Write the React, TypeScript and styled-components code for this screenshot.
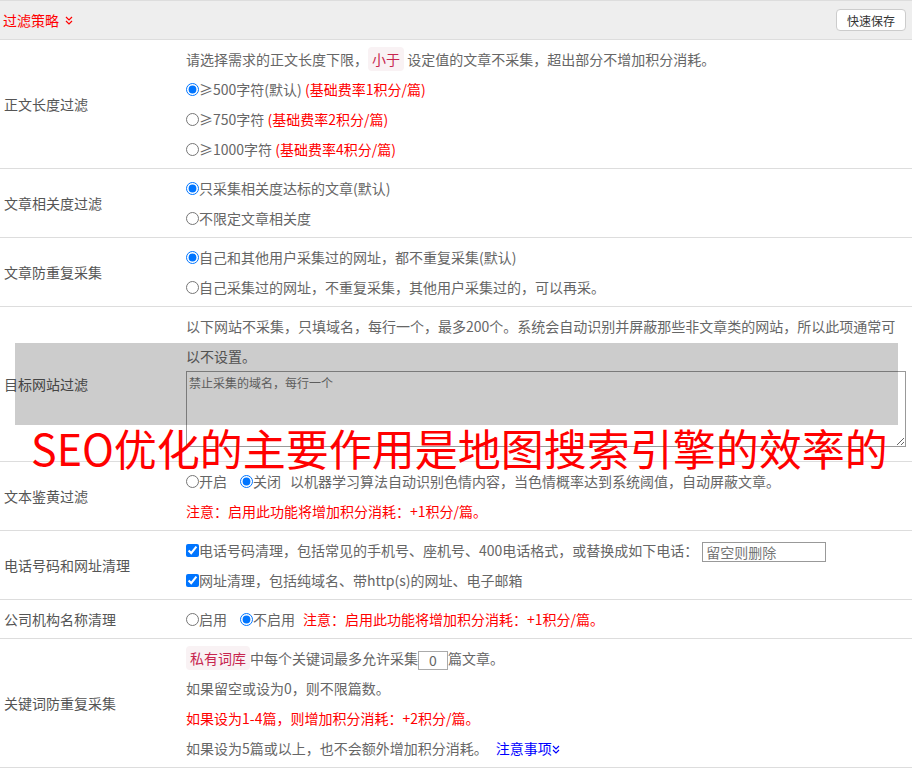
import styled, { createGlobalStyle } from 'styled-components';

const font = '"Noto Sans CJK SC", "Noto Sans", sans-serif';

const GlobalStyle = createGlobalStyle`
  body {
    margin: 0;
    background: #fff;
    font-family: ${font};
    font-size: 14px;
    color: #666;
  }
`;

const Page = styled.div`
  position: relative;
  width: 912px;
`;

const Header = styled.div`
  display: flex;
  align-items: center;
  justify-content: space-between;
  height: 38px;
  padding: 0 6px 0 3px;
  background: #eee;
  border-top: 1px solid #ddd;
  border-bottom: 1px solid #ddd;
`;

const Title = styled.div`
  display: flex;
  align-items: center;
  gap: 6px;
  color: #f00;
  font-size: 14px;
`;

const SaveButton = styled.button`
  height: 22px;
  padding: 0 10px;
  font-family: ${font};
  font-size: 12px;
  color: #333;
  background: #fff;
  border: 1px solid #ccc;
  border-radius: 4px;
`;

const Row = styled.div`
  display: grid;
  grid-template-columns: 186px 1fr;
  padding: 4px 6px 4px 0;
  border-bottom: 1px solid #ddd;
`;

const Label = styled.div`
  align-self: center;
  padding-left: 4px;
  color: #555;
  line-height: 20px;
`;

const Content = styled.div`
  line-height: 30px;
`;

const Line = styled.div`
  white-space: nowrap;
`;

const Para = styled.p`
  margin: 0;
`;

const Choice = styled.label<{ $gap?: number }>`
  display: inline-flex;
  align-items: center;
  height: 30px;
  vertical-align: top;
  margin-right: ${p => p.$gap ?? 0}px;
`;

const Box = styled.input`
  width: 13px;
  height: 13px;
  margin: 0;
`;

const Warn = styled.span`
  color: #f00;
`;

const Badge = styled.span`
  padding: 2px 4px;
  border-radius: 4px;
  background: #f9f2f4;
  color: #c7254e;
`;

const Area = styled.textarea`
  display: block;
  box-sizing: border-box;
  width: 720px;
  height: 76px;
  margin: 0 0 10px;
  padding: 2px;
  border: 1px solid #999;
  font-family: ${font};
  font-size: 12px;
  color: #666;
  resize: vertical;
`;

const PhoneInput = styled.input`
  box-sizing: border-box;
  width: 124px;
  height: 20px;
  margin-left: 4px;
  padding: 0 3px;
  border: 1px solid #999;
  font-family: ${font};
  font-size: 14px;
  vertical-align: middle;
`;

const CountInput = styled.input`
  box-sizing: border-box;
  width: 30px;
  height: 19px;
  padding: 0;
  border: 1px solid #aaa;
  font-family: ${font};
  font-size: 14px;
  color: #666;
  text-align: center;
  vertical-align: middle;
`;

const Link = styled.a`
  margin-left: 8px;
  color: #00f;
  text-decoration: none;
  cursor: pointer;
`;

// watermark box and caption laid over the page
const Shade = styled.div`
  position: absolute;
  left: 15px;
  top: 343px;
  width: 883px;
  height: 82px;
  background: rgba(0, 0, 0, 0.2);
  pointer-events: none;
`;

const Caption = styled.div`
  position: absolute;
  left: 31px;
  top: 420px;
  font-size: 43px;
  line-height: 54px;
  color: #f00;
  white-space: nowrap;
  pointer-events: none;
`;

const Chevrons = ({ color }: { color: string }) => (
  <svg width='8' height='9' viewBox='0 0 8 9' fill='none' stroke={color} strokeWidth='1.2'>
    <polyline points='1,1 4,4 7,1' />
    <polyline points='1,5 4,8 7,5' />
  </svg>
);

const Radio = ({ name, checked, text, gap }: { name: string; checked?: boolean; text: string; gap?: number }) => (
  <Choice $gap={gap}>
    <Box type='radio' name={name} defaultChecked={checked} />
    {text}
  </Choice>
);

export default function App() {
  return (
    <Page>
      <GlobalStyle />
      <Header>
        <Title>
          过滤策略
          <Chevrons color='#f00' />
        </Title>
        <SaveButton type='button'>快速保存</SaveButton>
      </Header>

      <Row>
        <Label>正文长度过滤</Label>
        <Content>
          <Line>
            请选择需求的正文长度下限，<Badge>小于</Badge> 设定值的文章不采集，超出部分不增加积分消耗。
          </Line>
          <Line>
            <Radio name='len' checked text='≥500字符(默认)' /> <Warn>(基础费率1积分/篇)</Warn>
          </Line>
          <Line>
            <Radio name='len' text='≥750字符' /> <Warn>(基础费率2积分/篇)</Warn>
          </Line>
          <Line>
            <Radio name='len' text='≥1000字符' /> <Warn>(基础费率4积分/篇)</Warn>
          </Line>
        </Content>
      </Row>

      <Row>
        <Label>文章相关度过滤</Label>
        <Content>
          <Line><Radio name='rel' checked text='只采集相关度达标的文章(默认)' /></Line>
          <Line><Radio name='rel' text='不限定文章相关度' /></Line>
        </Content>
      </Row>

      <Row>
        <Label>文章防重复采集</Label>
        <Content>
          <Line><Radio name='dup' checked text='自己和其他用户采集过的网址，都不重复采集(默认)' /></Line>
          <Line><Radio name='dup' text='自己采集过的网址，不重复采集，其他用户采集过的，可以再采。' /></Line>
        </Content>
      </Row>

      <Row>
        <Label>目标网站过滤</Label>
        <Content>
          <Para>
            以下网站不采集，只填域名，每行一个，最多200个。系统会自动识别并屏蔽那些非文章类的网站，所以此项通常可以不设置。
          </Para>
          <Area placeholder='禁止采集的域名，每行一个' />
        </Content>
      </Row>

      <Row>
        <Label>文本鉴黄过滤</Label>
        <Content>
          <Line>
            <Radio name='porn' text='开启' gap={13} />
            <Radio name='porn' checked text='关闭' gap={9} />
            以机器学习算法自动识别色情内容，当色情概率达到系统阈值，自动屏蔽文章。
          </Line>
          <Line>
            <Warn>注意：启用此功能将增加积分消耗：+1积分/篇。</Warn>
          </Line>
        </Content>
      </Row>

      <Row>
        <Label>电话号码和网址清理</Label>
        <Content>
          <Line>
            <Choice>
              <Box type='checkbox' defaultChecked />
              电话号码清理，包括常见的手机号、座机号、400电话格式，或替换成如下电话：
            </Choice>
            <PhoneInput type='text' placeholder='留空则删除' />
          </Line>
          <Line>
            <Choice>
              <Box type='checkbox' defaultChecked />
              网址清理，包括纯域名、带http(s)的网址、电子邮箱
            </Choice>
          </Line>
        </Content>
      </Row>

      <Row>
        <Label>公司机构名称清理</Label>
        <Content>
          <Line>
            <Radio name='org' text='启用' gap={13} />
            <Radio name='org' checked text='不启用' gap={8} />
            <Warn>注意：启用此功能将增加积分消耗：+1积分/篇。</Warn>
          </Line>
        </Content>
      </Row>

      <Row>
        <Label>关键词防重复采集</Label>
        <Content>
          <Line>
            <Badge>私有词库</Badge>中每个关键词最多允许采集<CountInput type='text' defaultValue='0' />篇文章。
          </Line>
          <Line>如果留空或设为0，则不限篇数。</Line>
          <Line>
            <Warn>如果设为1-4篇，则增加积分消耗：+2积分/篇。</Warn>
          </Line>
          <Line>
            如果设为5篇或以上，也不会额外增加积分消耗。
            <Link>
              注意事项<Chevrons color='#00f' />
            </Link>
          </Line>
        </Content>
      </Row>

      <Shade />
      <Caption>SEO优化的主要作用是地图搜索引擎的效率的</Caption>
    </Page>
  );
}
